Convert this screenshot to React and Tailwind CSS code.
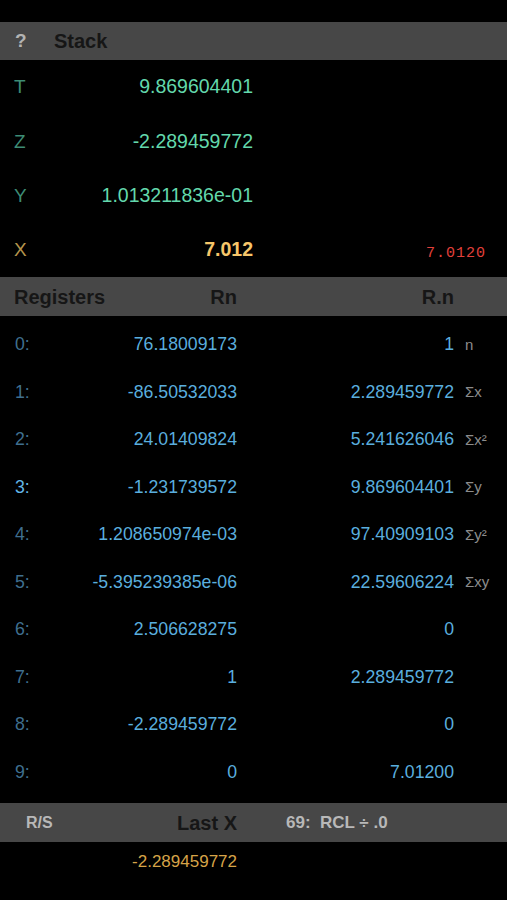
import React from 'react';

const stack = [
  { label: 'T', value: '9.869604401' },
  { label: 'Z', value: '-2.289459772' },
  { label: 'Y', value: '1.013211836e-01' },
];

const registers = [
  { idx: '0:', rn: '76.18009173', rdn: '1', tag: 'n' },
  { idx: '1:', rn: '-86.50532033', rdn: '2.289459772', tag: 'Σx' },
  { idx: '2:', rn: '24.01409824', rdn: '5.241626046', tag: 'Σx²' },
  { idx: '3:', rn: '-1.231739572', rdn: '9.869604401', tag: 'Σy', active: true },
  { idx: '4:', rn: '1.208650974e-03', rdn: '97.40909103', tag: 'Σy²' },
  { idx: '5:', rn: '-5.395239385e-06', rdn: '22.59606224', tag: 'Σxy' },
  { idx: '6:', rn: '2.506628275', rdn: '0', tag: '' },
  { idx: '7:', rn: '1', rdn: '2.289459772', tag: '' },
  { idx: '8:', rn: '-2.289459772', rdn: '0', tag: '' },
  { idx: '9:', rn: '0', rdn: '7.01200', tag: '' },
];

const App = () => {
  return (
    <div className="w-[507px] h-[900px] bg-black overflow-hidden font-['Liberation_Sans',Arial,sans-serif]">
      <div className="h-[22px]" />

      {/* stack header */}
      <div className="h-[38px] bg-[#474747] flex items-center">
        <span className="w-[54px] pl-[15px] text-[19px] font-bold text-[#b3b3b3]">?</span>
        <span className="text-[20px] font-bold text-[#161616]">Stack</span>
      </div>

      <div className="h-[217px] flex flex-col">
        {stack.map((row) => (
          <div key={row.label} className="flex-1 flex items-center">
            <div className="w-[253px] flex justify-between items-baseline pl-[14px]">
              <span className="text-[19px] text-[#3d8c75]">{row.label}</span>
              <span className="text-[19.5px] text-[#63d8ac]">{row.value}</span>
            </div>
          </div>
        ))}
        <div className="flex-1 flex items-center">
          <div className="w-[253px] flex justify-between items-baseline pl-[14px]">
            <span className="text-[19px] text-[#b4944c]">X</span>
            <span className="text-[19.5px] font-bold text-[#f6c66a]">7.012</span>
          </div>
          <div className="flex-1 text-right pr-[21px] pt-[8px] font-['Liberation_Mono',monospace] text-[15px] tracking-[1px] text-[#e2403b]">
            7.0120
          </div>
        </div>
      </div>

      {/* registers header */}
      <div className="h-[39px] bg-[#474747] flex items-center text-[20px] font-bold text-[#161616]">
        <div className="w-[237px] flex justify-between pl-[14px]">
          <span>Registers</span>
          <span>Rn</span>
        </div>
        <div className="w-[217px] text-right">R.n</div>
      </div>

      <div className="h-[487px] pt-[5px]">
        {registers.map((r) => (
          <div key={r.idx} className="h-[47.5px] flex items-center text-[17.7px]">
            <div className="w-[237px] flex justify-between pl-[15px]">
              <span className={r.active ? 'text-[#62b6e6]' : 'text-[#3f6f8f]'}>{r.idx}</span>
              <span className="text-[#5aaede]">{r.rn}</span>
            </div>
            <div className="w-[217px] text-right text-[#5aaede]">{r.rdn}</div>
            <div className="pl-[11px] text-[15px] text-[#8c8c8c]">{r.tag}</div>
          </div>
        ))}
      </div>

      {/* last x bar */}
      <div className="h-[39px] bg-[#474747] flex items-center">
        <span className="w-[60px] pl-[26px] text-[16px] font-bold text-[#b8b8b8]">R/S</span>
        <span className="w-[177px] text-right text-[20px] font-bold text-[#161616]">Last X</span>
        <span className="pl-[49px] text-[17px] font-bold text-[#b8b8b8] whitespace-pre">69:  RCL ÷ .0</span>
      </div>

      <div className="h-[39px] flex items-center">
        <div className="w-[237px] text-right text-[17px] text-[#d6a448]">-2.289459772</div>
      </div>
    </div>
  );
};

export default App;
